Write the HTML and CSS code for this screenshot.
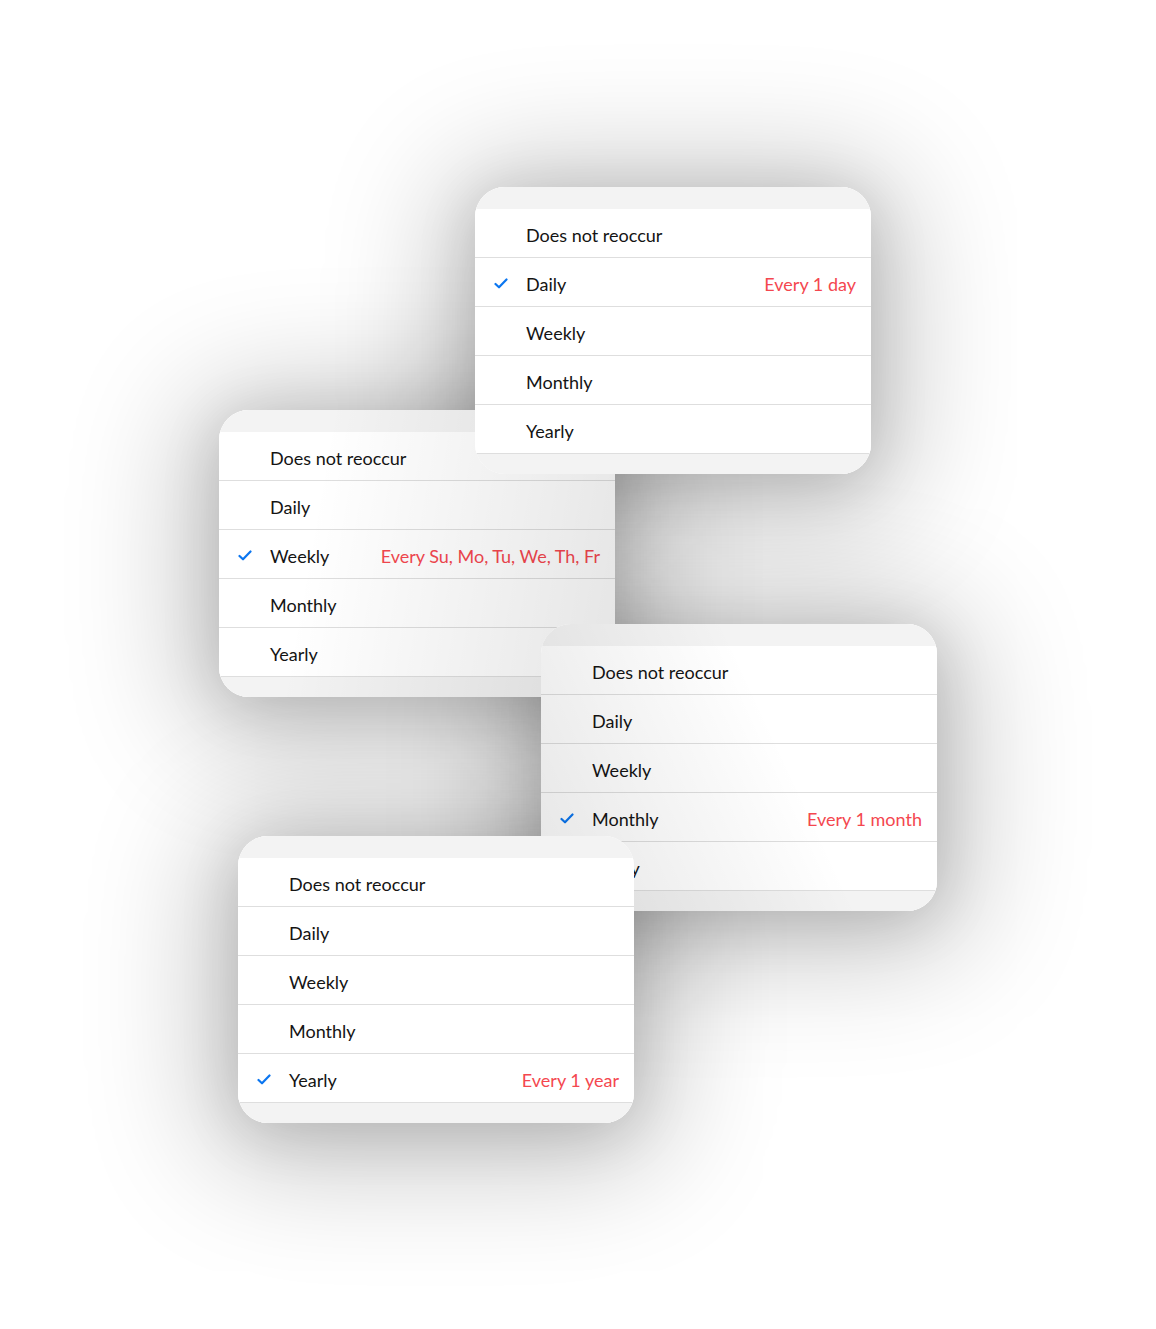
FILE: index.html
```html
<!DOCTYPE html>
<html lang="en">
    <head>
        <meta charset="UTF-8" />
        <meta name="viewport" content="width=device-width, initial-scale=1.0" />
        <title>Repeat options</title>
        <link rel="stylesheet" href="styles.css">
    </head>
    <body>
        <div class="canvas">
            <!-- weekly -->
            <div class="card card--weekly">
                <div class="card-body">
                    <div class="card-head"></div>
                    <ul class="options">
                        <li class="option"><span class="label">Does not reoccur</span></li>
                        <li class="option"><span class="label">Daily</span></li>
                        <li class="option">
                            <svg class="check" viewBox="0 0 14 11"><path d="M1.5 6 L5 9.3 L12.5 1.5" /></svg>
                            <span class="label">Weekly</span>
                            <span class="detail">Every Su, Mo, Tu, We, Th, Fr</span>
                        </li>
                        <li class="option"><span class="label">Monthly</span></li>
                        <li class="option"><span class="label">Yearly</span></li>
                    </ul>
                    <div class="card-foot"></div>
                </div>
            </div>

            <!-- daily -->
            <div class="card card--daily">
                <div class="card-body">
                    <div class="card-head"></div>
                    <ul class="options">
                        <li class="option"><span class="label">Does not reoccur</span></li>
                        <li class="option">
                            <svg class="check" viewBox="0 0 14 11"><path d="M1.5 6 L5 9.3 L12.5 1.5" /></svg>
                            <span class="label">Daily</span>
                            <span class="detail">Every 1 day</span>
                        </li>
                        <li class="option"><span class="label">Weekly</span></li>
                        <li class="option"><span class="label">Monthly</span></li>
                        <li class="option"><span class="label">Yearly</span></li>
                    </ul>
                    <div class="card-foot"></div>
                </div>
            </div>

            <!-- monthly -->
            <div class="card card--monthly">
                <div class="card-body">
                    <div class="card-head"></div>
                    <ul class="options">
                        <li class="option"><span class="label">Does not reoccur</span></li>
                        <li class="option"><span class="label">Daily</span></li>
                        <li class="option"><span class="label">Weekly</span></li>
                        <li class="option">
                            <svg class="check" viewBox="0 0 14 11"><path d="M1.5 6 L5 9.3 L12.5 1.5" /></svg>
                            <span class="label">Monthly</span>
                            <span class="detail">Every 1 month</span>
                        </li>
                        <li class="option"><span class="label">Yearly</span></li>
                    </ul>
                    <div class="card-foot"></div>
                </div>
            </div>

            <!-- yearly -->
            <div class="card card--yearly">
                <div class="card-body">
                    <div class="card-head"></div>
                    <ul class="options">
                        <li class="option"><span class="label">Does not reoccur</span></li>
                        <li class="option"><span class="label">Daily</span></li>
                        <li class="option"><span class="label">Weekly</span></li>
                        <li class="option"><span class="label">Monthly</span></li>
                        <li class="option">
                            <svg class="check" viewBox="0 0 14 11"><path d="M1.5 6 L5 9.3 L12.5 1.5" /></svg>
                            <span class="label">Yearly</span>
                            <span class="detail">Every 1 year</span>
                        </li>
                    </ul>
                    <div class="card-foot"></div>
                </div>
            </div>
        </div>
    </body>
</html>
```

FILE: styles.css
```css
body {
    margin: 0;
    padding: 0;
    background-color: #fff;
    font-family: Lato, "Open Sans", sans-serif;
    color: #141414;
}
.canvas {
    position: relative;
    z-index: 0;
    width: 1156px;
    height: 1329px;
    overflow: hidden;
}
.card {
    position: absolute;
    width: 396px;
    border-radius: 30px;
}
/* shadows live below every card */
.card::before {
    content: "";
    position: absolute;
    inset: 0;
    z-index: -1;
    border-radius: 30px;
    box-shadow: 0 8px 60px rgba(0, 0, 0, 0.14),
        0 12px 125px 30px rgba(0, 0, 0, 0.23);
}
.card-body {
    position: relative;
    border-radius: 30px;
    overflow: hidden;
    background: #fff;
}
.card-body::after {
    content: "";
    position: absolute;
    inset: 0;
    pointer-events: none;
}
.card--daily {
    left: 475px;
    top: 187px;
}
.card--weekly {
    left: 219px;
    top: 410px;
}
.card--weekly .card-body::after {
    background: linear-gradient(100deg, rgba(0, 0, 0, 0) 25%, rgba(0, 0, 0, 0.1) 100%);
}
.card--monthly {
    left: 541px;
    top: 624px;
}
.card--monthly .card-body::after {
    background: linear-gradient(65deg, rgba(0, 0, 0, 0.1) 0%, rgba(0, 0, 0, 0) 60%);
}
.card--yearly {
    left: 238px;
    top: 836px;
}
.card-head {
    height: 22px;
    background: #f3f3f3;
}
.card-foot {
    height: 20px;
    background: #f3f3f3;
}
.options {
    list-style: none;
    margin: 0;
    padding: 0;
}
.option {
    box-sizing: border-box;
    display: grid;
    grid-template-columns: 51px 1fr auto;
    align-items: center;
    height: 49px;
    padding: 3px 15px 0 0;
    border-bottom: 1px solid #dedede;
    font-size: 18px;
    background: #fff;
}
.option .label {
    grid-column: 2;
}
.check {
    grid-column: 1;
    width: 14px;
    height: 11px;
    margin-left: 19px;
    fill: none;
    stroke: #0b76f0;
    stroke-width: 2.2;
    stroke-linecap: round;
    stroke-linejoin: round;
}
.detail {
    grid-column: 3;
    color: #f4474f;
}
```
